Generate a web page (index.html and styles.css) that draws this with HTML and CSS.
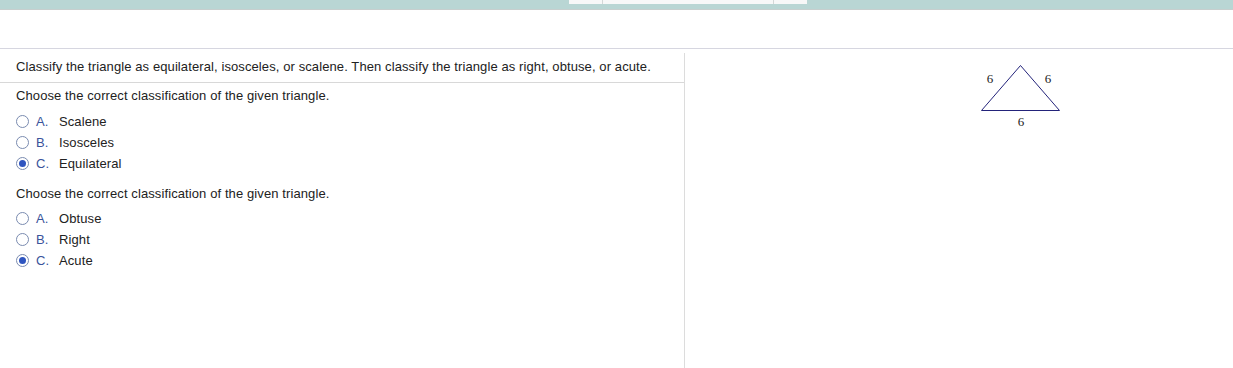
FILE: index.html
```html
<!DOCTYPE html>
<html>
<head>
<meta charset="utf-8">
<link rel="stylesheet" href="styles.css">
</head>
<body>
<div class="topbar">
  <div class="tab"><span class="seg s1"></span><span class="seg s2"></span><span class="seg s3"></span></div>
</div>
<div class="spacer"></div>
<div class="main">
  <div class="left">
    <div class="question">Classify the triangle as equilateral, isosceles, or scalene. Then classify the triangle as right, obtuse, or acute.</div>
    <div class="part">
      <div class="prompt">Choose the correct classification of the given triangle.</div>
      <div class="opt"><span class="radio"></span><span class="letter">A.</span><span class="label">Scalene</span></div>
      <div class="opt"><span class="radio"></span><span class="letter">B.</span><span class="label">Isosceles</span></div>
      <div class="opt"><span class="radio on"></span><span class="letter">C.</span><span class="label">Equilateral</span></div>
    </div>
    <div class="part second">
      <div class="prompt">Choose the correct classification of the given triangle.</div>
      <div class="opt"><span class="radio"></span><span class="letter">A.</span><span class="label">Obtuse</span></div>
      <div class="opt"><span class="radio"></span><span class="letter">B.</span><span class="label">Right</span></div>
      <div class="opt"><span class="radio on"></span><span class="letter">C.</span><span class="label">Acute</span></div>
    </div>
  </div>
  <div class="right">
    <svg class="fig" width="100" height="72" viewBox="970 58 100 72">
      <polygon points="981.5,110.5 1020.5,65.5 1059.5,110.5" fill="none" stroke="#23237a" stroke-width="1"/>
      <text x="990" y="83" class="num">6</text>
      <text x="1048" y="83" class="num">6</text>
      <text x="1021" y="126" class="num">6</text>
    </svg>
  </div>
</div>
</body>
</html>
```
FILE: styles.css
```css
html, body { margin: 0; padding: 0; background: #fff; }
body { font-family: "Liberation Sans", Arial, sans-serif; font-size: 13px; letter-spacing: 0.1px; color: #222; overflow: hidden; height: 368px; }
.topbar { height: 9px; background: #b9d6d4; border-bottom: 1px solid #c7cfce; display: flex; padding-left: 569px; }
.tab { display: flex; height: 4px; width: 238px; background: #f7f8f8; }
.seg { display: block; height: 4px; }
.s1 { width: 33px; border-right: 1px solid #d4d8d8; }
.s2 { width: 170px; border-right: 1px solid #d4d8d8; }
.s3 { flex: 1; }
.spacer { height: 38px; border-bottom: 1px solid #d6d6e0; }
.main { display: flex; padding-top: 4px; height: 320px; }
.left { width: 684px; border-right: 1px solid #dcdcdc; }
.question { padding: 6px 16px 7px; line-height: 16px; border-bottom: 1px solid #d8d8d8; }
.part { padding-left: 16px; margin-top: 5px; }
.part.second { margin-top: 12px; }
.prompt { line-height: 16px; margin-bottom: 7px; }
.part.second .prompt { margin-bottom: 6px; }
.opt { display: flex; align-items: center; height: 21px; line-height: 21px; }
.radio { border: 1px solid #7a8bb0; border-radius: 50%; box-sizing: border-box; width: 13px; height: 13px; display: flex; align-items: center; justify-content: center; margin-right: 7px; }
.radio.on::after { content: ""; width: 7px; height: 7px; border-radius: 50%; background: #2f55c0; }
.letter { color: #3a539b; width: 23px; }
.label { color: #222; }
.right { flex: 1; }
.fig { display: block; margin-left: 285px; margin-top: 5px; }
.num { font-family: "Liberation Serif", "Times New Roman", serif; font-size: 13px; fill: #222; text-anchor: middle; letter-spacing: 0; }
```
